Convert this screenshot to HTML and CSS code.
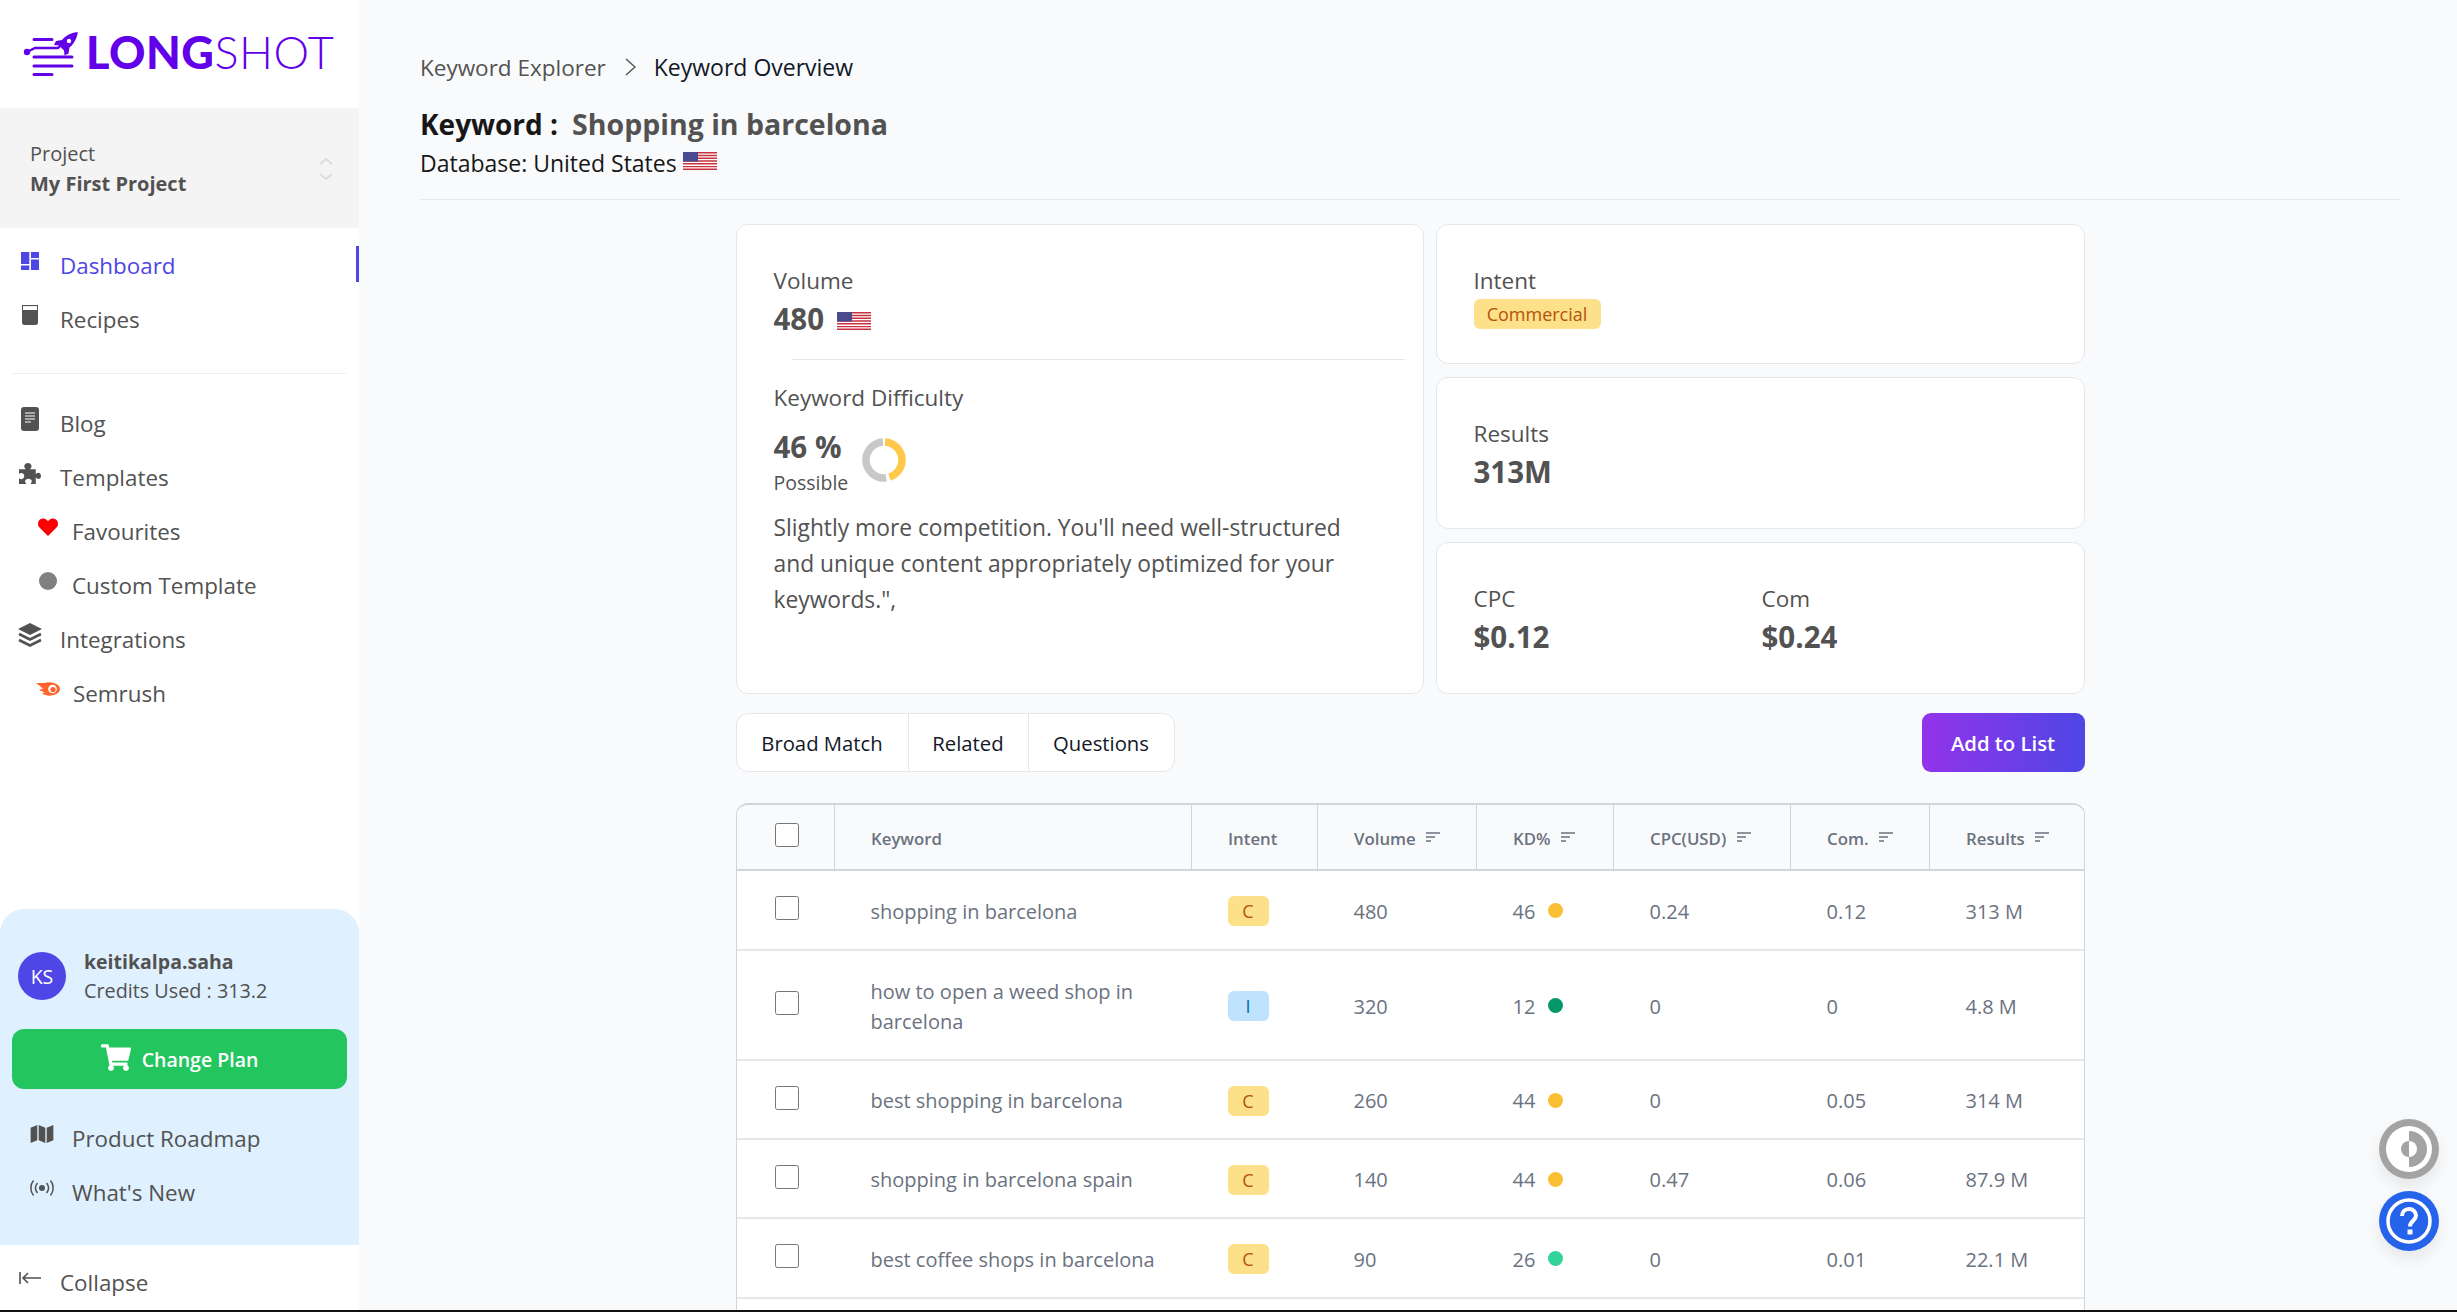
FILE: index.html
```html
<!DOCTYPE html>
<html lang="en">
<head>
	<meta charset="UTF-8">
	<title>Keyword Overview</title>
	<link rel="stylesheet" href="styles.css">
</head>
<body>
	<svg class="defs">
		<symbol id="flag" viewBox="0 0 34 18">
			<rect width="34" height="18" fill="#fff"/>
			<path d="M0 .7h34M0 3.5h34M0 6.3h34M0 9h34M0 11.8h34M0 14.6h34M0 17.3h34" stroke="#c8313e" stroke-width="1.4"/>
			<rect width="15" height="9.6" fill="#4a4a8f"/>
		</symbol>
		<symbol id="sort" viewBox="0 0 14 10">
			<path d="M0 1h14M0 5h9M0 9h5" stroke="#6b7280" stroke-width="1.4" fill="none"/>
		</symbol>
	</svg>
	<div class="app">
		<aside class="side">
			<div class="logo">
				<svg class="logo-mark" viewBox="0 0 60 48">
					<g fill="none" stroke="#6200ea" stroke-width="3" stroke-linecap="round">
						<path d="M12 9.5h18M12 27h38M12 36h38M12 44.5h18"/>
						<path d="M5 22l8-4h23l6-6" stroke-width="2.4"/>
					</g>
					<circle cx="5" cy="22" r="3.2" fill="#6200ea"/>
					<path d="M56 2c-6 .5-12 3-16 8l-6 1-2 4 5 .5 5 5 .5 5 4-2 1-6c5-4 7.500-10 8.500-16z" fill="#6200ea"/>
					<circle cx="47" cy="11" r="2.200" fill="#fff"/>
				</svg>
				<span class="logo-text"><b>LONG</b>SHOT</span>
			</div>
			<div class="project">
				<div>
					<div class="project-label">Project</div>
					<div class="project-name">My First Project</div>
				</div>
				<svg class="project-arrows" viewBox="0 0 14 24"><path d="M1 7l6-5 6 5M1 17l6 5 6-5" fill="none" stroke="#dcdcdc" stroke-width="2"/></svg>
			</div>
			<nav class="nav">
				<a class="item active"><svg class="ico" viewBox="3 3 18 18"><path d="M3 3h8.300v12H3zM3 16.500h8.300V21H3zM13 3h8v6h-8zM13 10.500h8V21h-8z" fill="#4f46e5"/></svg>Dashboard</a>
				<a class="item"><svg class="ico ico-glass" viewBox="0 0 18 20"><path d="M1 .5h16" stroke="#525252" stroke-width="1.200"/><path d="M1 1v16.500c0 1.400 1 2.500 2.400 2.500h11.200c1.400 0 2.400-1.100 2.400-2.500V1h-1v4H2V1z" fill="#525252"/></svg>Recipes</a>
				<hr class="side-line">
				<a class="item"><svg class="ico ico-tall" viewBox="0 0 18 24"><rect width="18" height="24" rx="3" fill="#525252"/><path d="M4 6h10M4 9h10M4 12h10M4 15h6" stroke="#fff" stroke-width="1.200"/></svg>Blog</a>
				<a class="item"><svg class="ico ico-wide" viewBox="0 0 21 20"><path d="M0 6h6.500C5.500 5 5 4 5 3c0-1.700 1.600-3 3.500-3S12 1.300 12 3c0 1-.5 2-1.500 3H16v4.500c1-.9 1.800-1.300 2.600-1.300 1.400 0 2.400 1.300 2.400 3s-1 3-2.400 3c-.8 0-1.600-.4-2.600-1.300V20h-5c.8-1 1.200-1.800 1.200-2.600 0-1.400-1.500-2.400-3.200-2.400S5.800 16 5.800 17.400c0 .8.4 1.600 1.200 2.600H0v-5.500c.8.7 1.500 1 2.200 1 1.500 0 2.800-1.200 2.800-3s-1.300-3-2.800-3c-.7 0-1.400.3-2.200 1z" fill="#525252"/></svg>Templates</a>
				<a class="item sub"><svg class="ico" viewBox="0 0 20 18"><path d="M10 18L1.500 9.500C-.5 7.500-.5 4 1.500 2 3.500 0 6.800 0 8.800 2L10 3.300 11.200 2c2-2 5.300-2 7.300 0s2 5.500 0 7.500z" fill="#f00"/></svg>Favourites</a>
				<a class="item sub"><svg class="ico" viewBox="0 0 20 20"><circle cx="10" cy="10" r="10" fill="#808080"/></svg>Custom Template</a>
				<a class="item"><svg class="ico ico-layers" viewBox="0 0 24 24"><path d="M12 0l12 6-12 6L0 6z" fill="#525252"/><path d="M1 11l11 5.500L23 11M1 17l11 5.500L23 17" fill="none" stroke="#525252" stroke-width="2.600"/></svg>Integrations</a>
				<a class="item sub"><svg class="ico ico-semrush" viewBox="0 0 24 14"><path d="M0 1h9c2-1 6-1 9 0 3 1 6 3 6 6s-3 5-6 6c-3 1-6 1-8 0-2 0-3-1-4-2l3-.5L3 8l4-1.500z" fill="#ff642d"/><circle cx="16.500" cy="7" r="4.300" fill="#fff"/><circle cx="17" cy="7.500" r="2.600" fill="#ff642d"/></svg>Semrush</a>
			</nav>
			<div class="panel">
				<div class="user">
					<div class="avatar">KS</div>
					<div>
						<div class="user-name">keitikalpa.saha</div>
						<div class="user-credits">Credits Used : 313.2</div>
					</div>
				</div>
				<a class="plan-btn"><svg class="cart" viewBox="0 0 576 512"><path d="M528.12 301.319l47.273-208C578.806 78.301 567.391 64 551.99 64H159.208l-9.166-44.81C147.758 8.021 137.93 0 126.529 0H24C10.745 0 0 10.745 0 24v16c0 13.255 10.745 24 24 24h69.883l70.248 343.435C147.325 417.1 136 435.222 136 456c0 30.928 25.072 56 56 56s56-25.072 56-56c0-15.674-6.447-29.835-16.824-40h209.647C430.447 426.165 424 440.326 424 456c0 30.928 25.072 56 56 56s56-25.072 56-56c0-22.172-12.888-41.332-31.579-50.405l5.517-24.276c3.413-15.018-8.002-29.319-23.403-29.319H218.117l-6.545-32h293.145c11.206 0 20.92-7.754 23.403-18.681z" fill="#fff"/></svg>Change Plan</a>
				<div class="panel-links">
					<a class="item sub"><svg class="ico ico-map" viewBox="0 0 24 19"><path d="M0 3l7-3v16l-7 3zM8.500 0l7 3v16l-7-3zM17 3l7-3v16l-7 3z" fill="#525252"/></svg>Product Roadmap</a>
					<a class="item sub"><svg class="ico ico-map" viewBox="0 0 24 17"><circle cx="12" cy="8.500" r="3" fill="#525252"/><path d="M7.500 3.500c-2.500 3-2.500 7 0 10M16.500 3.500c2.500 3 2.500 7 0 10M3.500 1C0 5 0 12 3.500 16M20.500 1C24 5 24 12 20.500 16" fill="none" stroke="#525252" stroke-width="1.500"/></svg>What's New</a>
				</div>
			</div>
			<a class="item collapse"><svg class="ico ico-collapse" viewBox="0 0 22 12"><path d="M1 0v12M22 6H4M9 1L4 6l5 5" fill="none" stroke="#525252" stroke-width="1.600"/></svg>Collapse</a>
		</aside>

		<main class="main">
			<header class="head">
				<div class="crumbs">
					<span class="crumb">Keyword Explorer</span>
					<svg class="crumb-sep" viewBox="0 0 11 18"><path d="M1 1l9 8-9 8" fill="none" stroke="#555" stroke-width="1.500"/></svg>
					<span class="crumb-now">Keyword Overview</span>
				</div>
				<h1 class="title">Keyword :<span class="title-kw">Shopping in barcelona</span></h1>
				<div class="database">Database: United States <svg class="flag"><use href="#flag"/></svg></div>
			</header>

			<div class="content">
				<section class="stats">
					<div class="card card-main">
						<div class="label">Volume</div>
						<div class="value">480 <svg class="flag flag-val"><use href="#flag"/></svg></div>
						<hr class="card-line">
						<div class="label">Keyword Difficulty</div>
						<div class="kd">
							<div>
								<div class="value kd-val">46 %</div>
								<div class="kd-word">Possible</div>
							</div>
							<svg class="donut" viewBox="0 0 44 44">
								<g transform="rotate(-90 22 22)">
									<circle cx="22" cy="22" r="18" pathLength="100" fill="none" stroke="#c8c8c8" stroke-width="7.500" stroke-dasharray="51 49" stroke-dashoffset="-48"/>
									<circle cx="22" cy="22" r="18" pathLength="100" fill="none" stroke="#ffc84a" stroke-width="7.500" stroke-dasharray="44 56" stroke-dashoffset="-1"/>
								</g>
							</svg>
						</div>
						<p class="desc">Slightly more competition. You'll need well-structured and unique content appropriately optimized for your keywords.",</p>
					</div>
					<div class="card">
						<div class="label">Intent</div>
						<span class="badge badge-wide">Commercial</span>
					</div>
					<div class="card">
						<div class="label">Results</div>
						<div class="value">313M</div>
					</div>
					<div class="card card-pair">
						<div>
							<div class="label">CPC</div>
							<div class="value">$0.12</div>
						</div>
						<div>
							<div class="label">Com</div>
							<div class="value">$0.24</div>
						</div>
					</div>
				</section>

				<div class="toolbar">
					<div class="tabs">
						<a class="tab tab-broad">Broad Match</a>
						<a class="tab tab-related">Related</a>
						<a class="tab tab-questions">Questions</a>
					</div>
					<a class="add-btn">Add to List</a>
				</div>

				<div class="table-wrap">
					<table class="table">
						<colgroup>
							<col class="c-check"><col class="c-kw"><col class="c-intent"><col class="c-vol"><col class="c-kd"><col class="c-cpc"><col class="c-com"><col class="c-res">
						</colgroup>
						<thead>
							<tr>
								<th class="cell-check"><input type="checkbox"></th>
								<th>Keyword</th>
								<th>Intent</th>
								<th>Volume <svg class="sort"><use href="#sort"/></svg></th>
								<th>KD% <svg class="sort"><use href="#sort"/></svg></th>
								<th>CPC(USD) <svg class="sort"><use href="#sort"/></svg></th>
								<th>Com. <svg class="sort"><use href="#sort"/></svg></th>
								<th>Results <svg class="sort"><use href="#sort"/></svg></th>
							</tr>
						</thead>
						<tbody>
							<tr class="r3">
								<td class="cell-check"><input type="checkbox"></td>
								<td>shopping in barcelona</td>
								<td><span class="badge badge-c">C</span></td>
								<td>480</td>
								<td>46<i class="dot dot-mid"></i></td>
								<td>0.24</td>
								<td>0.12</td>
								<td>313 M</td>
							</tr>
							<tr class="r2">
								<td class="cell-check"><input type="checkbox"></td>
								<td>how to open a weed shop in barcelona</td>
								<td><span class="badge badge-c badge-i">I</span></td>
								<td>320</td>
								<td>12<i class="dot dot-easy"></i></td>
								<td>0</td>
								<td>0</td>
								<td>4.8 M</td>
							</tr>
							<tr class="r1">
								<td class="cell-check"><input type="checkbox"></td>
								<td>best shopping in barcelona</td>
								<td><span class="badge badge-c">C</span></td>
								<td>260</td>
								<td>44<i class="dot dot-mid"></i></td>
								<td>0</td>
								<td>0.05</td>
								<td>314 M</td>
							</tr>
							<tr class="r1">
								<td class="cell-check"><input type="checkbox"></td>
								<td>shopping in barcelona spain</td>
								<td><span class="badge badge-c">C</span></td>
								<td>140</td>
								<td>44<i class="dot dot-mid"></i></td>
								<td>0.47</td>
								<td>0.06</td>
								<td>87.9 M</td>
							</tr>
							<tr class="r3">
								<td class="cell-check"><input type="checkbox"></td>
								<td>best coffee shops in barcelona</td>
								<td><span class="badge badge-c">C</span></td>
								<td>90</td>
								<td>26<i class="dot dot-low"></i></td>
								<td>0</td>
								<td>0.01</td>
								<td>22.1 M</td>
							</tr>
						</tbody>
					</table>
				</div>
			</div>
		</main>
	</div>
	<div class="screen-edge"></div>

	<a class="float float-grey">
		<svg viewBox="0 0 60 60"><circle cx="30" cy="30" r="30" fill="#a3a3a3"/><circle cx="30" cy="30" r="23" fill="#fff"/><path d="M30 12a18 18 0 0 1 0 36z" fill="#a3a3a3"/><path d="M30 22a8 8 0 0 1 0 16z" fill="#fff"/><path d="M30 22a8 8 0 0 0 0 16z" fill="#a3a3a3"/></svg>
	</a>
	<a class="float float-blue">
		<svg viewBox="0 0 60 60"><circle cx="30" cy="30" r="30" fill="#2563eb"/><circle cx="30" cy="30" r="21" fill="none" stroke="#fff" stroke-width="3.500"/><path d="M23 25c0-4 3-7 7-7s7 3 7 6.500c0 5-6 5.500-6 11" fill="none" stroke="#fff" stroke-width="4"/><rect x="28.500" y="38.500" width="5" height="5" fill="#fff"/></svg>
	</a>
</body>
</html>
```
FILE: styles.css
```css
*{ margin: 0; padding: 0; box-sizing: border-box; list-style: none; text-decoration: none; }

html, body{ height: 100%; }
body{ display: flex; flex-direction: column; overflow: hidden; background: #f9fafb; color: #525252; font-family: "Open Sans", "Noto Sans", sans-serif; font-size: 22.4px; }
.defs{ display: none; }
.screen-edge{ height: 2px; flex: none; background: #111; }
.app{ flex: 1; display: flex; min-height: 0; overflow: hidden; }

/* sidebar */
.side{ width: 359px; flex: none; display: flex; flex-direction: column; background: #fff; }
.logo{ height: 108px; flex: none; display: flex; align-items: center; padding: 0 0 4px 22px; gap: 4px; color: #6200ea; }
.logo-mark{ width: 60px; height: 48px; margin-top: 4px; }
.logo-text{ font-family: Lato, sans-serif; font-size: 45px; font-weight: 300; letter-spacing: .5px; }
.logo-text b{ font-weight: 900; }
.project{ height: 120px; flex: none; display: flex; align-items: center; justify-content: space-between; padding: 2px 26px 0 30px; background: #f4f4f4; }
.project-label{ font-size: 20px; line-height: 30px; }
.project-name{ font-size: 20px; line-height: 30px; font-weight: 700; }
.project-arrows{ width: 14px; height: 24px; }

.nav{ padding-top: 10px; }
.item{ height: 54px; display: flex; align-items: center; padding-left: 21px; color: #525252; position: relative; }
.ico{ width: 18px; height: 18px; margin: -8px 21px 0 0; flex: none; }
.ico-glass{ height: 20px; }
.ico-tall{ height: 24px; }
.ico-wide{ width: 22px; height: 21px; margin-left: -2px; margin-right: 19px; }
.ico-layers{ width: 24px; height: 24px; margin-left: -3px; margin-right: 18px; }
.item.sub{ padding-left: 38px; }
.item.sub .ico{ width: 20px; margin-right: 14px; }
.item.sub .ico-semrush{ width: 24px; height: 14px; margin-left: -2px; margin-right: 13px; }
.active{ color: #4f46e5; }
.active:after{ content: ""; position: absolute; right: 0; top: 8px; width: 3px; height: 36px; background: #4f46e5; }
.side-line{ border: 0; border-top: 1px solid #f0f0f0; margin: 27px 12px 22px; }

.panel{ margin-top: auto; height: 336px; flex: none; background: #dff0fe; border-radius: 24px 24px 0 0; padding-top: 38px; }
.user{ display: flex; align-items: center; gap: 18px; padding-left: 18px; }
.avatar{ width: 48px; height: 48px; border-radius: 50%; background: #4f46e5; color: #fff; font-size: 19.5px; display: flex; align-items: center; justify-content: center; }
.user-name{ font-size: 19.5px; line-height: 29px; font-weight: 700; }
.user-credits{ font-size: 19.8px; line-height: 29px; }
.plan-btn{ height: 60px; margin: 24px 12px 0; border-radius: 12px; background: #22c55e; color: #fff; font-size: 19.5px; font-weight: 600; display: flex; align-items: center; justify-content: center; gap: 11px; }
.cart{ width: 30px; height: 27px; margin-top: -4px; }
.panel-links{ padding-top: 22px; }
.item.sub .ico-map{ width: 24px; margin-left: -8px; margin-right: 18px; }
.collapse{ height: 65px; flex: none; margin-top: 0; padding: 9px 0 0 19px; }
.ico-collapse{ width: 22px; height: 12px; margin-right: 19px; }

/* main */
.main{ flex: 1; min-width: 0; padding: 47px 57px 0 61px; }
.head{ border-bottom: 1px solid #e5e7eb; height: 153px; }
.crumbs{ height: 40px; display: flex; align-items: center; }
.crumb{ color: #525252; font-size: 22.5px; }
.crumb-sep{ width: 11px; height: 18px; margin: 0 18px 0 19px; }
.crumb-now{ color: #111827; font-size: 23px; font-weight: 500; }
.title{ height: 40px; margin-top: 17px; display: flex; align-items: center; gap: 14px; color: #171717; font-size: 28px; font-weight: 700; }
.title-kw{ color: #525252; font-size: 28.5px; }
.database{ height: 34px; margin-top: 2px; color: #171717; font-size: 23px; display: flex; align-items: center; gap: 6px; }
.flag{ width: 34px; height: 18px; margin-top: -4px; }

.content{ width: 1349px; margin: 24px auto 0; }
.stats{ display: grid; grid-template-columns: 688px 649px; grid-template-rows: 140px 152px 152px; gap: 13px 12px; }
.card{ background: #fff; border: 1px solid #e5e7eb; border-radius: 12px; padding: 39px 37px 0; }
.card-main{ grid-row: 1 / span 3; }
.label{ height: 33px; line-height: 33px; font-size: 22.5px; color: #525252; }
.value{ height: 44px; line-height: 44px; font-size: 29.5px; font-weight: 700; color: #525252; }
.flag-val{ margin: 0 0 3px 5px; vertical-align: middle; }
.card-line{ border: 0; border-top: 1px solid #e5e7eb; margin: 18px -19px 21px 18px; }
.kd{ display: flex; gap: 14px; margin-top: 13px; }
.kd-val{ height: 40px; line-height: 40px; }
.kd-word{ height: 32px; line-height: 32px; font-size: 19.5px; }
.donut{ width: 44px; height: 44px; margin-top: 11px; }
.desc{ margin-top: 11px; font-size: 22.8px; line-height: 36px; }
.badge{ display: inline-flex; align-items: center; justify-content: center; height: 30px; border-radius: 6px; background: #fde08a; color: #b45309; font-size: 18px; }
.badge-wide{ width: 127px; margin-top: -2px; }
.card-pair{ display: grid; grid-template-columns: 288px 1fr; }

.toolbar{ display: flex; justify-content: space-between; margin-top: 19px; height: 59px; }
.tabs{ display: flex; background: #fff; border: 1px solid #e5e7eb; border-radius: 12px; overflow: hidden; }
.tab{ display: flex; align-items: center; justify-content: center; color: #111827; font-size: 20.3px; font-weight: 500; border-right: 1px solid #e5e7eb; }
.tab-broad{ width: 172px; }
.tab-related{ width: 120px; }
.tab-questions{ width: 145px; border-right: 0; }
.add-btn{ width: 163px; display: flex; align-items: center; justify-content: center; border-radius: 9px; background: linear-gradient(to right, #9333ea, #4f46e5); color: #fff; font-size: 20.3px; font-weight: 600; }

.table-wrap{ margin-top: 31px; height: 600px; background: #fff; border: 1px solid #d1d5db; border-top-width: 2px; border-bottom: 0; border-radius: 12px 12px 0 0; overflow: hidden; }
.table{ width: 100%; table-layout: fixed; border-collapse: collapse; color: #6b7280; }
.c-check{ width: 98px; }
.c-kw{ width: 357px; }
.c-intent{ width: 126px; }
.c-vol{ width: 159px; }
.c-kd{ width: 137px; }
.c-cpc{ width: 177px; }
.c-com{ width: 139px; }
.c-res{ width: 155px; }
.table th{ height: 65px; padding: 2px 0 0 36px; background: #f9fafb; border-right: 1px solid #d1d5db; border-bottom: 2px solid #d1d5db; text-align: left; font-size: 16.8px; font-weight: 600; white-space: nowrap; }
.table th:last-child{ border-right: 0; }
.table td{ padding: 3px 30px 0 36px; border-bottom: 2px solid #e5e7eb; font-size: 20px; line-height: 30px; }
.table .cell-check{ padding: 0 0 4px 38px; }
.table th.cell-check{ padding: 0 0 4px 38px; }
.cell-check input{ width: 24px; height: 24px; display: block; }
.r1{ height: 79px; }
.r2{ height: 110px; }
.r3{ height: 80px; }
.sort{ width: 14px; height: 10px; margin: 0 0 3px 6px; }
.badge-c{ width: 41px; vertical-align: middle; margin-top: -4px; }
.badge-i{ background: #bfe3fe; color: #0369a1; }
.dot{ display: inline-block; width: 15px; height: 15px; margin: 0 0 5px 13px; border-radius: 50%; vertical-align: middle; }
.dot-mid{ background: #fbbf36; }
.dot-easy{ background: #059669; }
.dot-low{ background: #34d399; }

.float{ position: fixed; right: 18px; width: 60px; height: 60px; border-radius: 50%; box-shadow: 0 8px 16px rgba(0,0,0,.08); }
.float svg{ display: block; width: 60px; height: 60px; }
.float-grey{ top: 1119px; }
.float-blue{ top: 1191px; }
```
